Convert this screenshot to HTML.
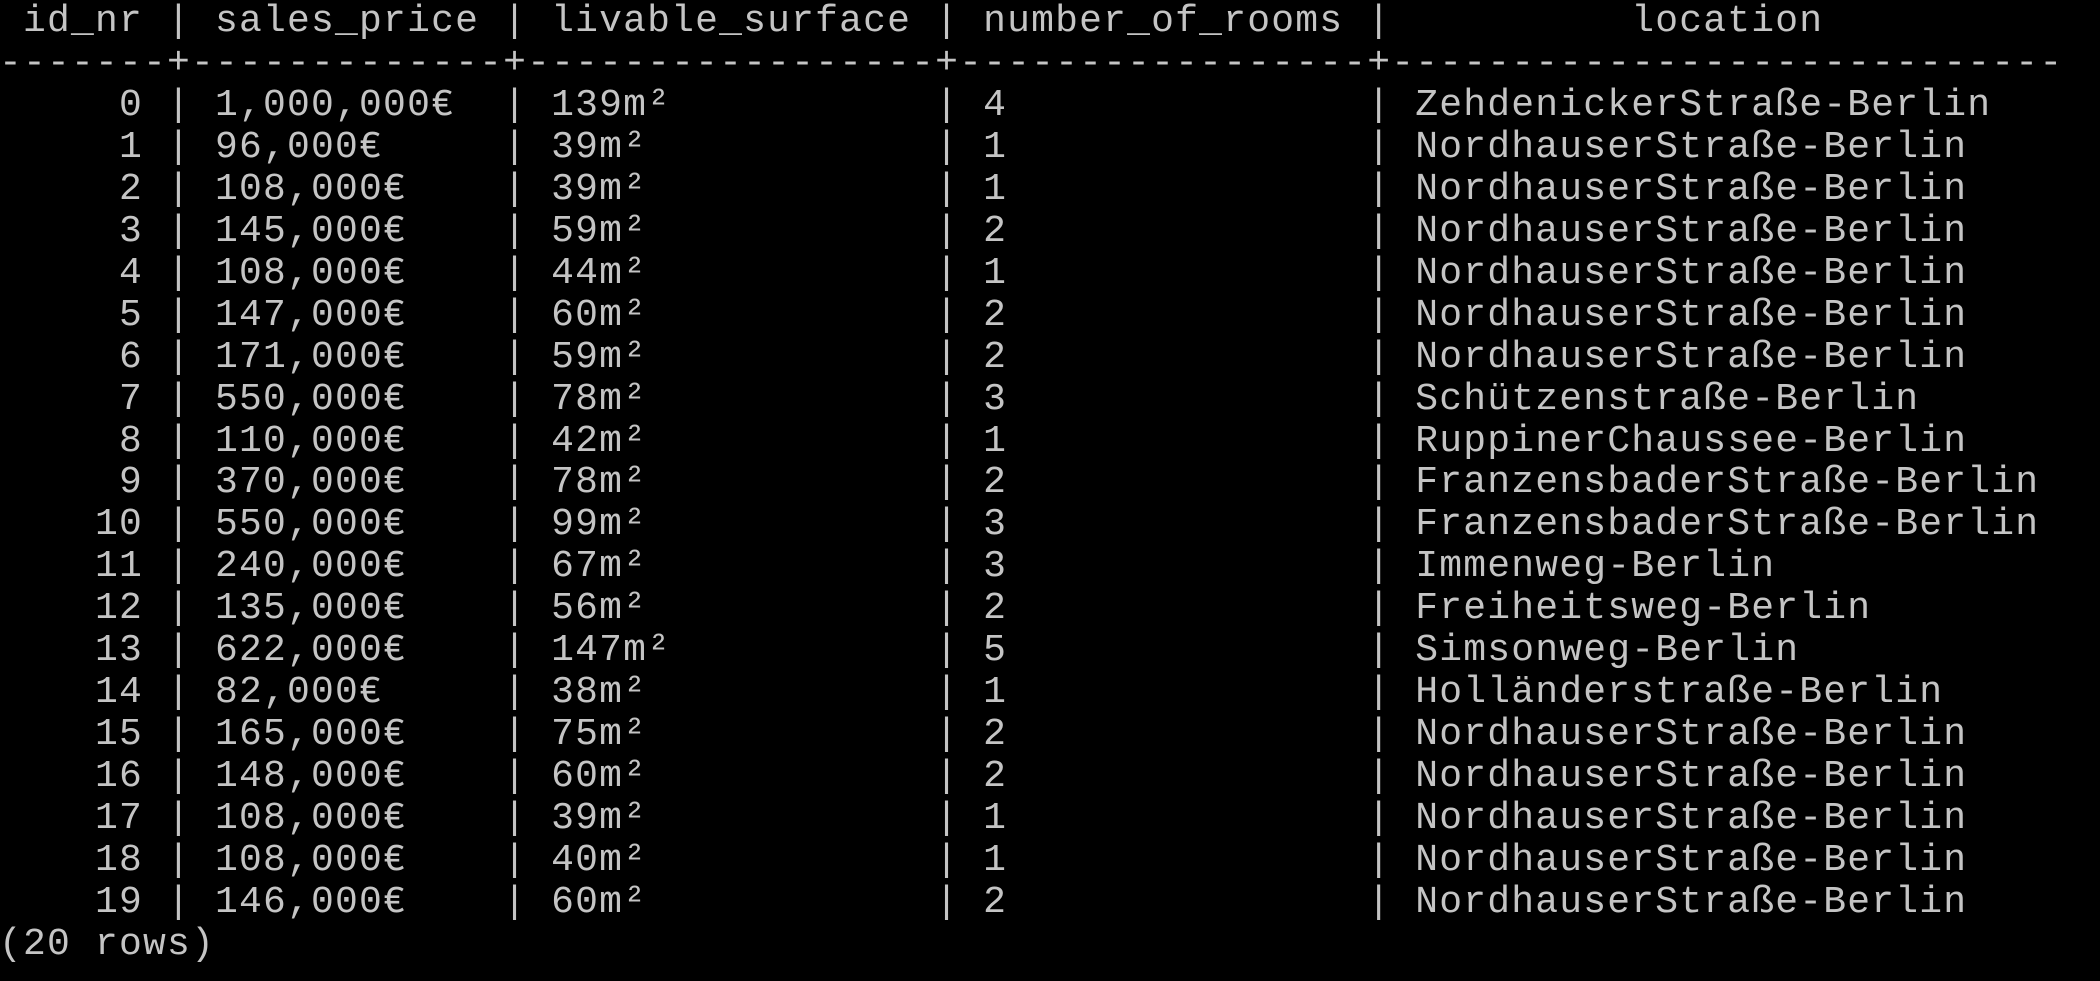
<!DOCTYPE html>
<html><head><meta charset="utf-8"><style>
html,body{margin:0;padding:0;background:#000;width:2100px;height:981px;overflow:hidden}
pre{position:absolute;left:-1px;top:1px;margin:0;font-family:"Liberation Mono",monospace;font-size:38px;letter-spacing:1.2px;line-height:41.95px;color:#c4c4c4}
</style></head><body><pre> id_nr | sales_price | livable_surface | number_of_rooms |          location
-------+-------------+-----------------+-----------------+----------------------------
     0 | 1,000,000€  | 139m²           | 4               | ZehdenickerStraße-Berlin
     1 | 96,000€     | 39m²            | 1               | NordhauserStraße-Berlin
     2 | 108,000€    | 39m²            | 1               | NordhauserStraße-Berlin
     3 | 145,000€    | 59m²            | 2               | NordhauserStraße-Berlin
     4 | 108,000€    | 44m²            | 1               | NordhauserStraße-Berlin
     5 | 147,000€    | 60m²            | 2               | NordhauserStraße-Berlin
     6 | 171,000€    | 59m²            | 2               | NordhauserStraße-Berlin
     7 | 550,000€    | 78m²            | 3               | Schützenstraße-Berlin
     8 | 110,000€    | 42m²            | 1               | RuppinerChaussee-Berlin
     9 | 370,000€    | 78m²            | 2               | FranzensbaderStraße-Berlin
    10 | 550,000€    | 99m²            | 3               | FranzensbaderStraße-Berlin
    11 | 240,000€    | 67m²            | 3               | Immenweg-Berlin
    12 | 135,000€    | 56m²            | 2               | Freiheitsweg-Berlin
    13 | 622,000€    | 147m²           | 5               | Simsonweg-Berlin
    14 | 82,000€     | 38m²            | 1               | Holländerstraße-Berlin
    15 | 165,000€    | 75m²            | 2               | NordhauserStraße-Berlin
    16 | 148,000€    | 60m²            | 2               | NordhauserStraße-Berlin
    17 | 108,000€    | 39m²            | 1               | NordhauserStraße-Berlin
    18 | 108,000€    | 40m²            | 1               | NordhauserStraße-Berlin
    19 | 146,000€    | 60m²            | 2               | NordhauserStraße-Berlin
(20 rows)</pre></body></html>
